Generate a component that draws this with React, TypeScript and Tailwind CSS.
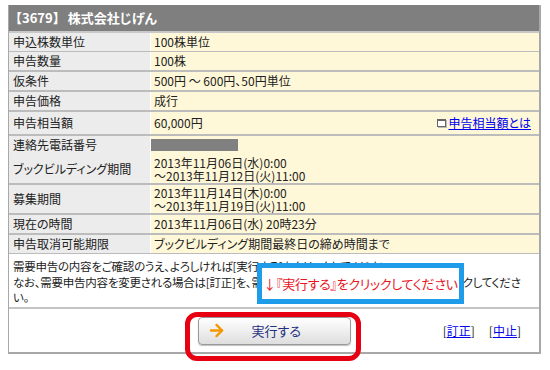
import { ArrowRight } from 'lucide-react';

const font = "font-['Noto_Sans_CJK_JP','Noto_Sans',sans-serif] [font-feature-settings:'palt']";

type Row = { label: string; h: string; value: React.ReactNode };

const rows: Row[] = [
    { label: '申込株数単位', h: 'h-[19px]', value: '100株単位' },
    { label: '申告数量', h: 'h-[20px]', value: '100株' },
    { label: '仮条件', h: 'h-[20px]', value: '500円 〜 600円、50円単位' },
    { label: '申告価格', h: 'h-[20px]', value: '成行' },
    {
        label: '申告相当額',
        h: 'h-[24px]',
        value: (
            <div className="flex items-center justify-between pr-[8px]">
                <span>60,000円</span>
                <a href="#" className="flex items-center gap-[2px] text-[#0000ee] underline">
                    <span className="inline-block w-[9px] h-[8px] border border-[#666] border-t-2 bg-white shadow-[1px_1px_0_#bbb]" />
                    申告相当額とは
                </a>
            </div>
        ),
    },
    {
        label: '連絡先電話番号',
        h: 'h-[18px]',
        value: <div className="-ml-[3px] w-[87px] h-[12px] bg-[#808080]" />,
    },
    {
        label: 'ブックビルディング期間',
        h: 'h-[31px]',
        value: (
            <div className="leading-[13px]">
                2013年11月06日(水)0:00
                <br />
                〜2013年11月12日(火)11:00
            </div>
        ),
    },
    {
        label: '募集期間',
        h: 'h-[30px]',
        value: (
            <div className="leading-[13px]">
                2013年11月14日(木)0:00
                <br />
                〜2013年11月19日(火)11:00
            </div>
        ),
    },
    { label: '現在の時間', h: 'h-[20px]', value: '2013年11月06日(水) 20時23分' },
    { label: '申告取消可能期限', h: 'h-[19px]', value: 'ブックビルディング期間最終日の締め時間まで' },
];

export default function App() {
    return (
        <div className={`relative w-[550px] h-[370px] bg-white pl-[8px] pt-[5px] text-[12px] text-[#222] ${font}`}>
            <div className="w-[533px] border-l border-r-2 border-b-2 border-[#a8a8a8]">
                {/* Header */}
                <div className="h-[28px] bg-[#7f7f7f] flex items-center pl-[0px] text-white font-bold text-[13px] border-b-2 border-[#c8c8c8] [font-feature-settings:normal]">
                    【3679】<span className="ml-[2px] [font-feature-settings:'palt']">株式会社じげん</span>
                </div>

                {rows.map((r) => (
                    <div key={r.label} className={`grid grid-cols-[142px_1fr] border-b-2 border-[#bcbcbc] ${r.h}`}>
                        <div className="bg-[#ececec] flex items-center pl-[4px] border-r border-white whitespace-nowrap">{r.label}</div>
                        <div className="bg-[#fff8d8] flex flex-col justify-center pl-[3px] whitespace-nowrap">{r.value}</div>
                    </div>
                ))}

                {/* Message */}
                <div className="h-[55px] pl-[4px] pt-[5px] text-[11.5px] leading-[15.5px] border-b-2 border-[#c4c4c4] whitespace-nowrap tracking-[-0.25px]">
                    需要申告の内容をご確認のうえ、よろしければ[実行する]をクリックしてください。
                    <br />
                    なお、需要申告内容を変更される場合は[訂正]を、需要申告を中止される場合は[中止]をクリックしてくださ
                    <br />
                    い。
                </div>

                {/* Buttons */}
                <div className="h-[43px] grid grid-cols-[1fr_auto_1fr] items-center">
                    <div />
                    <button className="w-[153px] h-[28px] rounded-[4px] border border-[#999] bg-gradient-to-b from-white to-[#dedede] shadow-[0_1px_1px_rgba(0,0,0,0.25)] flex items-center pl-[8px] gap-[26px] text-[13px] text-[#1e2f80]">
                        <ArrowRight size={19} strokeWidth={3} className="text-[#f39800]" />
                        実行する
                    </button>
                    <div className="flex justify-end gap-[14px] pr-[18px]">
                        <span>
                            [<a href="#" className="text-[#0000ee] underline">訂正</a>]
                        </span>
                        <span>
                            [<a href="#" className="text-[#0000ee] underline">中止</a>]
                        </span>
                    </div>
                </div>
            </div>

            {/* Callout overlay */}
            <div className="absolute left-[257px] top-[263px] w-[207px] h-[41px] border-[5px] border-[#1e9be9] bg-white flex items-center justify-center whitespace-nowrap text-[13px] tracking-[-0.3px] text-[#e8141e]">
                ↓『実行する』をクリックしてください
            </div>

            {/* Red highlight around button */}
            <div className="absolute left-[185px] top-[312px] w-[176px] h-[49px] border-[5px] border-[#e60012] rounded-[12px]" />
        </div>
    );
}
